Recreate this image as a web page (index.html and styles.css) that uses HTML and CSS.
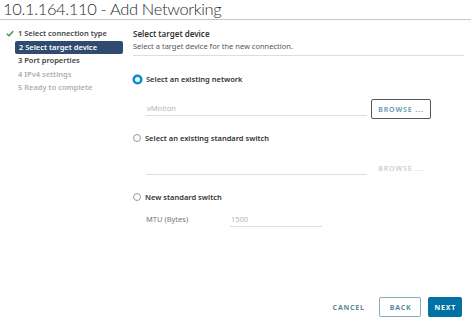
FILE: index.html
```html
<!DOCTYPE html>
<html lang="en">
<head>
  <meta charset="UTF-8">
  <title>Add Networking</title>
  <link rel="stylesheet" href="styles.css">
</head>
<body>
  <div class="wizard">
    <header class="wizard-title">10.1.164.110 - Add Networking</header>

    <div class="wizard-body">
      <nav class="steps">
        <div class="step done">
          <svg class="check" viewBox="0 0 10 8" width="8" height="7"><path d="M1 4.2 L3.8 6.8 L9 1.2" fill="none" stroke="#3c9a3c" stroke-width="1.8"/></svg>
          1 Select connection type
        </div>
        <div class="step active">2 Select target device</div>
        <div class="step">3 Port properties</div>
        <div class="step disabled">4 IPv4 settings</div>
        <div class="step disabled">5 Ready to complete</div>
      </nav>

      <main class="content">
        <div class="content-head">
          <h2>Select target device</h2>
          <p>Select a target device for the new connection.</p>
        </div>

        <label class="option first">
          <span class="radio checked"></span>
          Select an existing network
        </label>
        <div class="field-row">
          <div class="field">vMotion</div>
          <button class="browse">BROWSE ...</button>
        </div>

        <label class="option">
          <span class="radio"></span>
          Select an existing standard switch
        </label>
        <div class="field-row">
          <div class="field"></div>
          <button class="browse off">BROWSE ...</button>
        </div>

        <label class="option">
          <span class="radio"></span>
          New standard switch
        </label>
        <div class="mtu-row">
          <span class="mtu-label">MTU (Bytes)</span>
          <div class="field short">1500</div>
        </div>
      </main>
    </div>

    <footer class="actions">
      <button class="btn link">CANCEL</button>
      <button class="btn outline">BACK</button>
      <button class="btn primary">NEXT</button>
    </footer>
  </div>
</body>
</html>
```

FILE: styles.css
```css
body {
  margin: 0;
  background: #fff;
  font-family: 'Noto Sans', sans-serif;
  color: #333;
}
.wizard {
  width: 474px;
  height: 327px;
  display: flex;
  flex-direction: column;
}
.wizard-title {
  padding-left: 3px;
  font-family: Lato, sans-serif;
  font-size: 16.5px;
  font-weight: 300;
  line-height: 19px;
  letter-spacing: -0.35px;
  color: #2b2b2b;
  border-bottom: 1px solid #c8c8c8;
  width: 468px;
  white-space: nowrap;
}
.wizard-body {
  display: flex;
  flex: 1;
}
.steps {
  width: 125px;
  padding: 7px 0 0 5px;
  font-size: 7.5px;
  font-weight: 600;
}
.step {
  height: 13.5px;
  line-height: 13.5px;
  padding-left: 13px;
  color: #444;
  display: flex;
  align-items: center;
  white-space: nowrap;
}
.step.done {
  padding-left: 1px;
}
.step.done .check {
  margin-right: 4px;
}
.step.active {
  background: #2f4b70;
  color: #fff;
  margin-left: 10px;
  padding-left: 4px;
  border-radius: 2px;
  width: 104px;
}
.step.disabled {
  color: #b0b0b0;
}
.content {
  flex: 1;
  padding: 7px 6px 0 3px;
  font-size: 7.5px;
}
.content-head {
  border-bottom: 1px solid #ddd;
  padding-bottom: 3px;
  margin-right: 4px;
}
.content-head h2 {
  margin: 0;
  font-size: 8px;
  font-weight: 600;
  line-height: 13px;
  color: #333;
}
.content-head p {
  margin: 0;
  line-height: 12px;
  color: #555;
}
.option {
  display: flex;
  align-items: center;
  gap: 4px;
  height: 12px;
  margin-top: 13px;
  font-weight: 600;
  color: #333;
}
.option.first {
  margin-top: 17px;
}
.radio {
  width: 8px;
  height: 8px;
  border: 1px solid #999;
  border-radius: 50%;
  box-sizing: border-box;
  background: #fff;
}
.radio.checked {
  width: 9px;
  height: 9px;
  border: 2.5px solid #0095d3;
  background: #fff;
  box-shadow: 0 0 0 0.5px #0079b8;
}
.field-row {
  display: flex;
  align-items: flex-start;
  gap: 4px;
  margin: 14px 0 0 13px;
  height: 20px;
}
.field {
  width: 220px;
  height: 14px;
  line-height: 14px;
  border-bottom: 1px solid #ddd;
  color: #b5b5b5;
  font-size: 7.5px;
  padding-left: 1px;
  margin-top: 2px;
}
.browse {
  width: 60px;
  height: 20px;
  border: 1.5px solid #555;
  border-radius: 2px;
  background: #fff;
  font-family: 'Noto Sans', sans-serif;
  font-size: 7px;
  font-weight: 600;
  letter-spacing: 0.9px;
  color: #5c95ad;
  padding: 0;
}
.browse.off {
  border-color: transparent;
  color: #cdcdcd;
}
.mtu-row {
  display: flex;
  align-items: center;
  margin: 9px 0 0 13px;
  height: 14px;
}
.mtu-label {
  width: 84px;
  color: #777;
  font-size: 7.5px;
}
.field.short {
  width: 91px;
  margin-top: 0;
}
.actions {
  display: flex;
  justify-content: flex-end;
  align-items: center;
  gap: 7px;
  padding: 0 12px 10px 0;
}
.btn {
  height: 20px;
  font-family: 'Noto Sans', sans-serif;
  font-size: 7px;
  font-weight: 700;
  letter-spacing: 0.8px;
  border-radius: 2px;
  padding: 0 9px 0 10px;
  background: #fff;
  border: 1px solid transparent;
}
.btn.link {
  color: #5c8aa0;
  padding: 0;
  margin-right: 6px;
}
.btn.outline {
  border-color: #8aa8b8;
  color: #5c8aa0;
}
.btn.primary {
  background: #0072a3;
  color: #fff;
  padding: 0 5px;
}
```
